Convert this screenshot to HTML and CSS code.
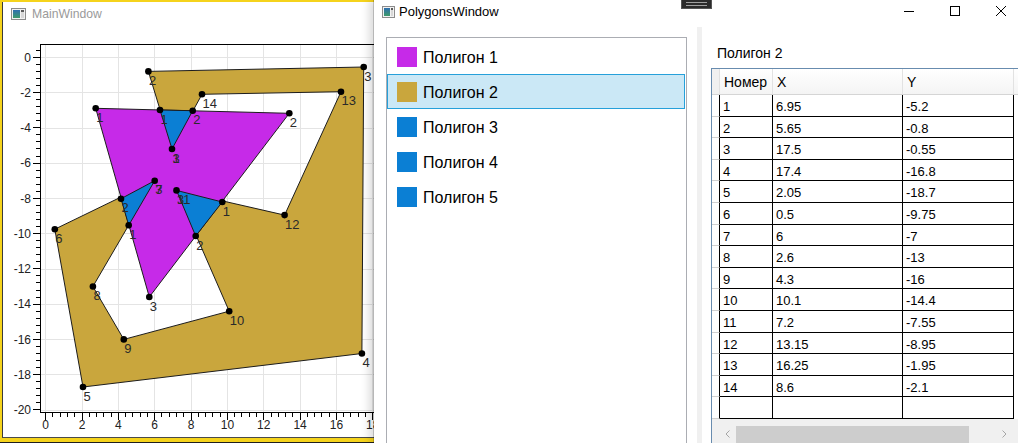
FILE: index.html
```html
<!DOCTYPE html>
<html lang="ru">
<head>
<meta charset="utf-8">
<title>Polygons</title>
<link rel="stylesheet" href="styles.css">
</head>
<body>
<div class="desktop">
  <section class="main-window">
    <div class="main-inner">
      <header class="main-title">
        <svg class="app-icon" width="15" height="12" viewBox="0 0 15 12">
          <defs><linearGradient id="ig1" x1="0" y1="0" x2="0" y2="1"><stop offset="0" stop-color="#2f6fb0"/><stop offset="1" stop-color="#3d9a6a"/></linearGradient></defs>
          <rect x="0.5" y="0.5" width="14" height="11" fill="#f2f2f2" stroke="#8c8c8c"/>
          <rect x="2" y="2" width="7" height="8" fill="url(#ig1)"/>
          <rect x="10" y="2" width="3" height="8" fill="#d8d8d8"/>
          <rect x="10" y="2" width="3" height="2" fill="#5a5a5a"/>
        </svg>
        <span>MainWindow</span>
      </header>
      <svg class="chart" width="371" height="407" viewBox="3 30 371 407">
        <g class="grid" stroke="#e4e4e4" stroke-width="1" shape-rendering="crispEdges">
          <line x1="45.5" y1="44" x2="45.5" y2="412"/>
          <line x1="82.5" y1="44" x2="82.5" y2="412"/>
          <line x1="118.5" y1="44" x2="118.5" y2="412"/>
          <line x1="154.5" y1="44" x2="154.5" y2="412"/>
          <line x1="191.5" y1="44" x2="191.5" y2="412"/>
          <line x1="227.5" y1="44" x2="227.5" y2="412"/>
          <line x1="263.5" y1="44" x2="263.5" y2="412"/>
          <line x1="300.5" y1="44" x2="300.5" y2="412"/>
          <line x1="336.5" y1="44" x2="336.5" y2="412"/>
          <line x1="372.5" y1="44" x2="372.5" y2="412"/>
          <line x1="40" y1="57.5" x2="374" y2="57.5"/>
          <line x1="40" y1="92.5" x2="374" y2="92.5"/>
          <line x1="40" y1="128.5" x2="374" y2="128.5"/>
          <line x1="40" y1="163.5" x2="374" y2="163.5"/>
          <line x1="40" y1="198.5" x2="374" y2="198.5"/>
          <line x1="40" y1="233.5" x2="374" y2="233.5"/>
          <line x1="40" y1="269.5" x2="374" y2="269.5"/>
          <line x1="40" y1="304.5" x2="374" y2="304.5"/>
          <line x1="40" y1="339.5" x2="374" y2="339.5"/>
          <line x1="40" y1="374.5" x2="374" y2="374.5"/>
          <line x1="40" y1="410.5" x2="374" y2="410.5"/>
        </g>

        <g stroke="#1c1c1c" stroke-width="1" stroke-linejoin="round">
          <polygon fill="#c9a63d" points="172,149 148.4,71.4 363.7,67 361.9,353.5 83,387 54.8,229.2 154.7,180.7 92.9,286.5 123.8,339.4 229.2,311.2 176.5,190.4 284.6,215.1 341,91.7 202,94.3"/>
          <polygon fill="#c62ae8" points="95.7,108.3 289.3,113.3 149.3,297"/>
          <polygon fill="#0b7fd4" points="160,110 192.7,110.7 172,149"/>
          <polygon fill="#0b7fd4" points="128.7,225.3 121,198.7 154.7,180.7"/>
          <polygon fill="#0b7fd4" points="222.3,202 195.7,236 176.5,190.4"/>
        </g>

        <g fill="#000">
          <circle cx="172" cy="149" r="3.3"/><circle cx="148.4" cy="71.4" r="3.3"/><circle cx="363.7" cy="67" r="3.3"/>
          <circle cx="361.9" cy="353.5" r="3.3"/><circle cx="83" cy="387" r="3.3"/><circle cx="54.8" cy="229.2" r="3.3"/>
          <circle cx="154.7" cy="180.7" r="3.3"/><circle cx="92.9" cy="286.5" r="3.3"/><circle cx="123.8" cy="339.4" r="3.3"/>
          <circle cx="229.2" cy="311.2" r="3.3"/><circle cx="176.5" cy="190.4" r="3.3"/><circle cx="284.6" cy="215.1" r="3.3"/>
          <circle cx="341" cy="91.7" r="3.3"/><circle cx="202" cy="94.3" r="3.3"/>
          <circle cx="95.7" cy="108.3" r="3.3"/><circle cx="289.3" cy="113.3" r="3.3"/><circle cx="149.3" cy="297" r="3.3"/>
          <circle cx="160" cy="110" r="3.3"/><circle cx="192.7" cy="110.7" r="3.3"/>
          <circle cx="128.7" cy="225.3" r="3.3"/><circle cx="121" cy="198.7" r="3.3"/>
          <circle cx="222.3" cy="202" r="3.3"/><circle cx="195.7" cy="236" r="3.3"/>
        </g>

        <g class="pt-label">
          <text x="172.5" y="162.5">1</text><text x="148.9" y="84.9">2</text><text x="364.2" y="80.5">3</text>
          <text x="362.4" y="367">4</text><text x="83.5" y="400.5">5</text><text x="55.3" y="242.7">6</text>
          <text x="155.2" y="194.2">7</text><text x="93.4" y="300">8</text><text x="124.3" y="352.9">9</text>
          <text x="229.7" y="324.7">10</text><text x="177" y="203.9">11</text><text x="285.1" y="228.6">12</text>
          <text x="341.5" y="105.2">13</text><text x="202.5" y="107.8">14</text>
          <text x="96.2" y="121.8">1</text><text x="289.8" y="126.8">2</text><text x="149.8" y="310.5">3</text>
          <text x="160.5" y="123.5">1</text><text x="193.2" y="124.2">2</text><text x="172.5" y="162.5">3</text>
          <text x="129.2" y="238.8">1</text><text x="121.5" y="212.2">2</text><text x="155.2" y="194.2">3</text>
          <text x="222.8" y="215.5">1</text><text x="196.2" y="249.5">2</text><text x="177" y="203.9">3</text>
        </g>

        <g stroke="#000" fill="none" shape-rendering="crispEdges">
          <rect x="40.5" y="44.5" width="400" height="368"/>
          <line x1="36.5" y1="56.8" x2="36.5" y2="412" stroke-width="7" stroke-dasharray="1 34.26"/>
          <line x1="38" y1="49.75" x2="38" y2="412" stroke-width="4" stroke-dasharray="1 6.052"/>
          <line x1="45.2" y1="416.5" x2="374" y2="416.5" stroke-width="7" stroke-dasharray="1 35.34"/>
          <line x1="45.2" y1="415" x2="374" y2="415" stroke-width="4" stroke-dasharray="1 6.268"/>
        </g>

        <g class="ax-label" text-anchor="end">
          <text x="31" y="61.6">0</text><text x="31" y="96.9">-2</text><text x="31" y="132.1">-4</text>
          <text x="31" y="167.4">-6</text><text x="31" y="202.6">-8</text><text x="31" y="237.9">-10</text>
          <text x="31" y="273.2">-12</text><text x="31" y="308.4">-14</text><text x="31" y="343.7">-16</text>
          <text x="31" y="378.9">-18</text><text x="31" y="414.2">-20</text>
        </g>
        <g class="ax-label" text-anchor="middle">
          <text x="45.7" y="429">0</text><text x="82" y="429">2</text><text x="118.4" y="429">4</text>
          <text x="154.7" y="429">6</text><text x="191.1" y="429">8</text><text x="227.4" y="429">10</text>
          <text x="263.7" y="429">12</text><text x="300.1" y="429">14</text><text x="336.4" y="429">16</text>
          <text x="372.8" y="429">18</text>
        </g>
      </svg>
    </div>
  </section>

  <section class="poly-window">
    <header class="poly-title">
      <div class="title-left">
        <svg class="app-icon" width="13" height="12" viewBox="0 0 13 12">
          <defs><linearGradient id="ig2" x1="0" y1="0" x2="0" y2="1"><stop offset="0" stop-color="#2f6fb0"/><stop offset="1" stop-color="#3d9a6a"/></linearGradient></defs>
          <rect x="0.5" y="0.5" width="12" height="11" fill="#f2f2f2" stroke="#8c8c8c"/>
          <rect x="2" y="2" width="6" height="8" fill="url(#ig2)"/>
          <rect x="9" y="2" width="2" height="8" fill="#d8d8d8"/>
          <rect x="9" y="2" width="2" height="2" fill="#5a5a5a"/>
        </svg>
        <span>PolygonsWindow</span>
      </div>
      <div class="caption-buttons">
        <div class="cap-btn"><svg width="10" height="10" viewBox="0 0 10 10"><line x1="0" y1="5.5" x2="10" y2="5.5" stroke="#000"/></svg></div>
        <div class="cap-btn"><svg width="10" height="10" viewBox="0 0 10 10"><rect x="0.5" y="0.5" width="9" height="9" fill="none" stroke="#000"/></svg></div>
        <div class="cap-btn"><svg width="10" height="10" viewBox="0 0 10 10"><path d="M0 0 L10 10 M10 0 L0 10" stroke="#000" stroke-width="1"/></svg></div>
      </div>
    </header>
    <div class="poly-body">
      <ul class="listbox">
        <li class="item"><span class="swatch sw-magenta"></span><span class="item-text">Полигон 1</span></li>
        <li class="item selected"><span class="swatch sw-gold"></span><span class="item-text">Полигон 2</span></li>
        <li class="item"><span class="swatch sw-blue"></span><span class="item-text">Полигон 3</span></li>
        <li class="item"><span class="swatch sw-blue"></span><span class="item-text">Полигон 4</span></li>
        <li class="item"><span class="swatch sw-blue"></span><span class="item-text">Полигон 5</span></li>
      </ul>
      <div class="splitter"></div>
      <div class="details">
        <div class="details-label">Полигон 2</div>
        <div class="datagrid">
          <div class="dg-header">
            <div class="rh"></div>
            <div class="hc c1">Номер</div>
            <div class="hc c2">X</div>
            <div class="hc c3">Y</div>
            <div class="hc rest"></div>
          </div>
          <div class="dg-row"><div class="rh"></div><div class="cell c1">1</div><div class="cell c2">6.95</div><div class="cell c3">-5.2</div><div class="rest"></div></div>
          <div class="dg-row"><div class="rh"></div><div class="cell c1">2</div><div class="cell c2">5.65</div><div class="cell c3">-0.8</div><div class="rest"></div></div>
          <div class="dg-row"><div class="rh"></div><div class="cell c1">3</div><div class="cell c2">17.5</div><div class="cell c3">-0.55</div><div class="rest"></div></div>
          <div class="dg-row"><div class="rh"></div><div class="cell c1">4</div><div class="cell c2">17.4</div><div class="cell c3">-16.8</div><div class="rest"></div></div>
          <div class="dg-row"><div class="rh"></div><div class="cell c1">5</div><div class="cell c2">2.05</div><div class="cell c3">-18.7</div><div class="rest"></div></div>
          <div class="dg-row"><div class="rh"></div><div class="cell c1">6</div><div class="cell c2">0.5</div><div class="cell c3">-9.75</div><div class="rest"></div></div>
          <div class="dg-row"><div class="rh"></div><div class="cell c1">7</div><div class="cell c2">6</div><div class="cell c3">-7</div><div class="rest"></div></div>
          <div class="dg-row"><div class="rh"></div><div class="cell c1">8</div><div class="cell c2">2.6</div><div class="cell c3">-13</div><div class="rest"></div></div>
          <div class="dg-row"><div class="rh"></div><div class="cell c1">9</div><div class="cell c2">4.3</div><div class="cell c3">-16</div><div class="rest"></div></div>
          <div class="dg-row"><div class="rh"></div><div class="cell c1">10</div><div class="cell c2">10.1</div><div class="cell c3">-14.4</div><div class="rest"></div></div>
          <div class="dg-row"><div class="rh"></div><div class="cell c1">11</div><div class="cell c2">7.2</div><div class="cell c3">-7.55</div><div class="rest"></div></div>
          <div class="dg-row"><div class="rh"></div><div class="cell c1">12</div><div class="cell c2">13.15</div><div class="cell c3">-8.95</div><div class="rest"></div></div>
          <div class="dg-row"><div class="rh"></div><div class="cell c1">13</div><div class="cell c2">16.25</div><div class="cell c3">-1.95</div><div class="rest"></div></div>
          <div class="dg-row"><div class="rh"></div><div class="cell c1">14</div><div class="cell c2">8.6</div><div class="cell c3">-2.1</div><div class="rest"></div></div>
          <div class="dg-row"><div class="rh"></div><div class="cell c1"></div><div class="cell c2"></div><div class="cell c3"></div><div class="rest"></div></div>
          <div class="dg-filler"></div>
          <div class="dg-hscroll">
            <div class="sb-btn"><svg width="5" height="8" viewBox="0 0 5 8"><path d="M4.5 0.5 L1 4 L4.5 7.5" fill="none" stroke="#a6a6a6"/></svg></div>
            <div class="sb-track"><div class="sb-thumb"></div></div>
            <div class="sb-btn"><svg width="5" height="8" viewBox="0 0 5 8"><path d="M0.5 0.5 L4 4 L0.5 7.5" fill="none" stroke="#a6a6a6"/></svg></div>
          </div>
        </div>
      </div>
    </div>
    <div class="snap-handle"></div>
  </section>
</div>
</body>
</html>
```
FILE: styles.css
```css
* { box-sizing: border-box; }
html, body { margin: 0; padding: 0; }
body {
  width: 1018px;
  height: 443px;
  overflow: hidden;
  background: #1e1e1e;
  font-family: "Liberation Sans", Arial, sans-serif;
  color: #000;
}
.desktop { display: flex; width: 1024px; height: 443px; }

/* ---------- Main window ---------- */
.main-window {
  flex: none;
  width: 374px;
  height: 442px;
  border-top: 2px solid #f5d31c;
  border-left: 2px solid #f5d31c;
  border-bottom: 4px solid #f5d31c;
  background: #fff;
}
.main-inner {
  height: 100%;
  border-left: 1px solid #3a3a3a;
  border-bottom: 1px solid #4a4a4a;
  display: flex;
  flex-direction: column;
}
.main-title {
  flex: none;
  height: 28px;
  padding: 0 0 4px 8px;
  display: flex;
  align-items: center;
  gap: 6px;
  color: #9a9a9a;
  font-size: 12.2px;
}
.app-icon { display: block; flex: none; }
.chart { display: block; flex: none; }
.pt-label text { font-family: "Liberation Sans", Arial, sans-serif; font-size: 13px; fill: #2a2a2a; }
.ax-label text { font-family: "Liberation Sans", Arial, sans-serif; font-size: 12px; fill: #222; }

/* ---------- Polygons window ---------- */
.poly-window {
  flex: none;
  width: 650px;
  height: 443px;
  background: #fff;
  position: relative;
  z-index: 1;
  box-shadow: -1px 0 0 rgba(0,0,0,0.18), -5px 0 8px rgba(0,0,0,0.14);
  display: flex;
  flex-direction: column;
  overflow: hidden;
}
.poly-title {
  flex: none;
  height: 27px;
  display: flex;
  align-items: flex-start;
}
.title-left {
  height: 23px;
  display: flex;
  align-items: center;
  padding-left: 8px;
  gap: 4px;
  font-size: 13px;
  color: #000;
}
.caption-buttons { margin-left: auto; display: flex; }
.cap-btn {
  width: 46px;
  height: 21px;
  display: flex;
  align-items: center;
  justify-content: center;
}
.cap-btn svg { display: block; }

.poly-body {
  flex: 1;
  min-height: 0;
  display: flex;
  padding-left: 12px;
}
.listbox {
  flex: none;
  width: 301px;
  height: 430px;
  margin: 10px 0 0 0;
  padding: 1px 1px 0 0;
  list-style: none;
  border: 1px solid #abadb3;
  background: #fff;
}
.item {
  height: 35px;
  display: flex;
  align-items: center;
  padding-left: 9px;
  border: 1px solid transparent;
  font-size: 16px;
  color: #000;
}
.item-text { padding-top: 3px; }
.item.selected { background: #cbe8f6; border-color: #26a0da; }
.swatch { width: 20px; height: 20px; flex: none; margin-right: 6px; margin-top: 1px; }
.sw-magenta { background: #c62ae8; }
.sw-gold { background: #c9a63d; }
.sw-blue { background: #0b7fd4; }

.splitter {
  flex: none;
  width: 5px;
  margin-left: 10px;
  background: #f0f0f0;
}

.details {
  flex: 1;
  min-width: 0;
  display: flex;
  flex-direction: column;
  padding: 18px 0 0 9px;
}
.details-label {
  font-size: 14px;
  line-height: 16px;
  padding-left: 6px;
  margin-bottom: 7px;
}
.datagrid {
  flex: none;
  width: 313px;
  border: 1px solid #688caf;
  background: #f0f0f0;
}
.dg-header {
  display: flex;
  height: 26px;
  background: linear-gradient(#ffffff, #f4f4f4);
  border-bottom: 1px solid #d5d5d5;
}
.dg-header .rh { width: 8px; flex: none; background: #f0f0f0; border-right: 1px solid #e0e0e0; }
.hc {
  flex: none;
  font-size: 14px;
  line-height: 23px;
  padding: 2px 0 0 4px;
  border-right: 1px solid #e2e2e2;
}
.hc.c1 { width: 53px; }
.hc.c2 { width: 130px; }
.hc.c3 { width: 111px; }
.hc.rest { flex: 1; border-right: none; }

.dg-row { display: flex; height: 21.6px; background: #fff; }
.dg-row .rh {
  width: 8px;
  flex: none;
  border-right: 1px solid #000;
  border-bottom: 1px solid #d0d0d0;
  background: #fff;
}
.cell {
  flex: none;
  font-size: 13px;
  line-height: 17.6px;
  padding: 3px 0 0 3px;
  border-right: 1px solid #000;
  border-bottom: 1px solid #000;
  white-space: nowrap;
}
.cell.c1 { width: 53px; }
.cell.c2 { width: 130px; }
.cell.c3 { width: 111px; }
.dg-row .rest { flex: 1; }

.dg-filler { height: 7px; }
.dg-hscroll {
  display: flex;
  height: 17px;
  padding-left: 7px;
}
.sb-btn {
  width: 17px;
  height: 17px;
  flex: none;
  display: flex;
  align-items: center;
  justify-content: center;
}
.sb-btn svg { display: block; }
.sb-track { width: 260px; flex: none; }
.sb-thumb { width: 233px; height: 17px; background: #cdcdcd; }

.snap-handle {
  position: absolute;
  top: 0;
  left: 307px;
  width: 31px;
  height: 9px;
  background-color: #2b2b2b;
  border: 1px solid #555;
  border-top: none;
  background-image: linear-gradient(to bottom, transparent 2px, #a0a0a0 2px, #a0a0a0 3px, transparent 3px, transparent 5px, #a0a0a0 5px, #a0a0a0 6px, transparent 6px);
  background-size: 21px 100%;
  background-position: center;
  background-repeat: no-repeat;
}
```
